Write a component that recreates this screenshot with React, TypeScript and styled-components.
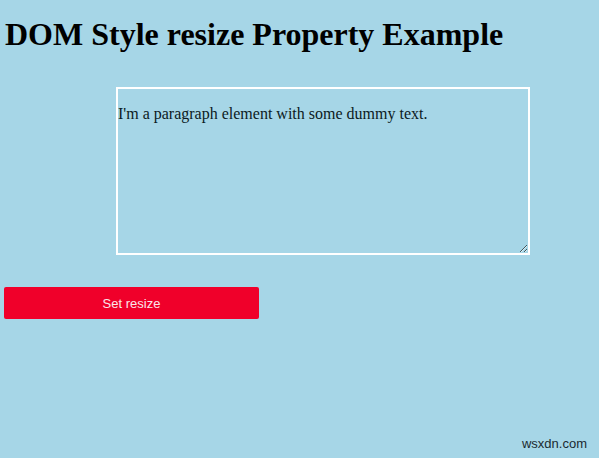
import React from 'react';
import styled, { createGlobalStyle } from 'styled-components';

const GlobalStyle = createGlobalStyle`
  html, body {
    margin: 0;
    padding: 0;
    background: #a6d6e7;
  }
  body {
    font-family: 'Liberation Serif', 'Times New Roman', serif;
    color: #000;
  }
`;

const Page = styled.div`
  position: relative;
  min-height: 458px;
  padding: 0 5px;
  box-sizing: border-box;
`;

const Title = styled.h1`
  margin: 0;
  padding-top: 16px;
  font-size: 32px;
  font-weight: bold;
  line-height: 37px;
`;

const ResizeBox = styled.div`
  margin: 34px 0 0 111px;
  width: 410px;
  height: 164px;
  border: 2px solid #fff;
  resize: both;
  overflow: auto;
`;

const Paragraph = styled.p`
  margin: 16px 0 0;
  font-size: 16px;
  color: #0c1a22;
`;

const ActionButton = styled.button`
  display: block;
  margin: 32px 0 0 -1px;
  width: 255px;
  height: 32px;
  border: none;
  border-radius: 2px;
  background: #f0002a;
  color: #fbe6ea;
  font-family: 'Liberation Sans', Arial, sans-serif;
  font-size: 13px;
  cursor: pointer;
`;

const Watermark = styled.span`
  position: absolute;
  right: 12px;
  bottom: 7px;
  font-family: 'Liberation Sans', Arial, sans-serif;
  font-size: 13px;
  color: #1a2a30;
`;

export default function App() {
  return (
    <>
      <GlobalStyle />
      <Page>
        <Title>DOM Style resize Property Example</Title>
        <ResizeBox>
          <Paragraph>I'm a paragraph element with some dummy text.</Paragraph>
        </ResizeBox>
        <ActionButton>Set resize</ActionButton>
        <Watermark>wsxdn.com</Watermark>
      </Page>
    </>
  );
}
